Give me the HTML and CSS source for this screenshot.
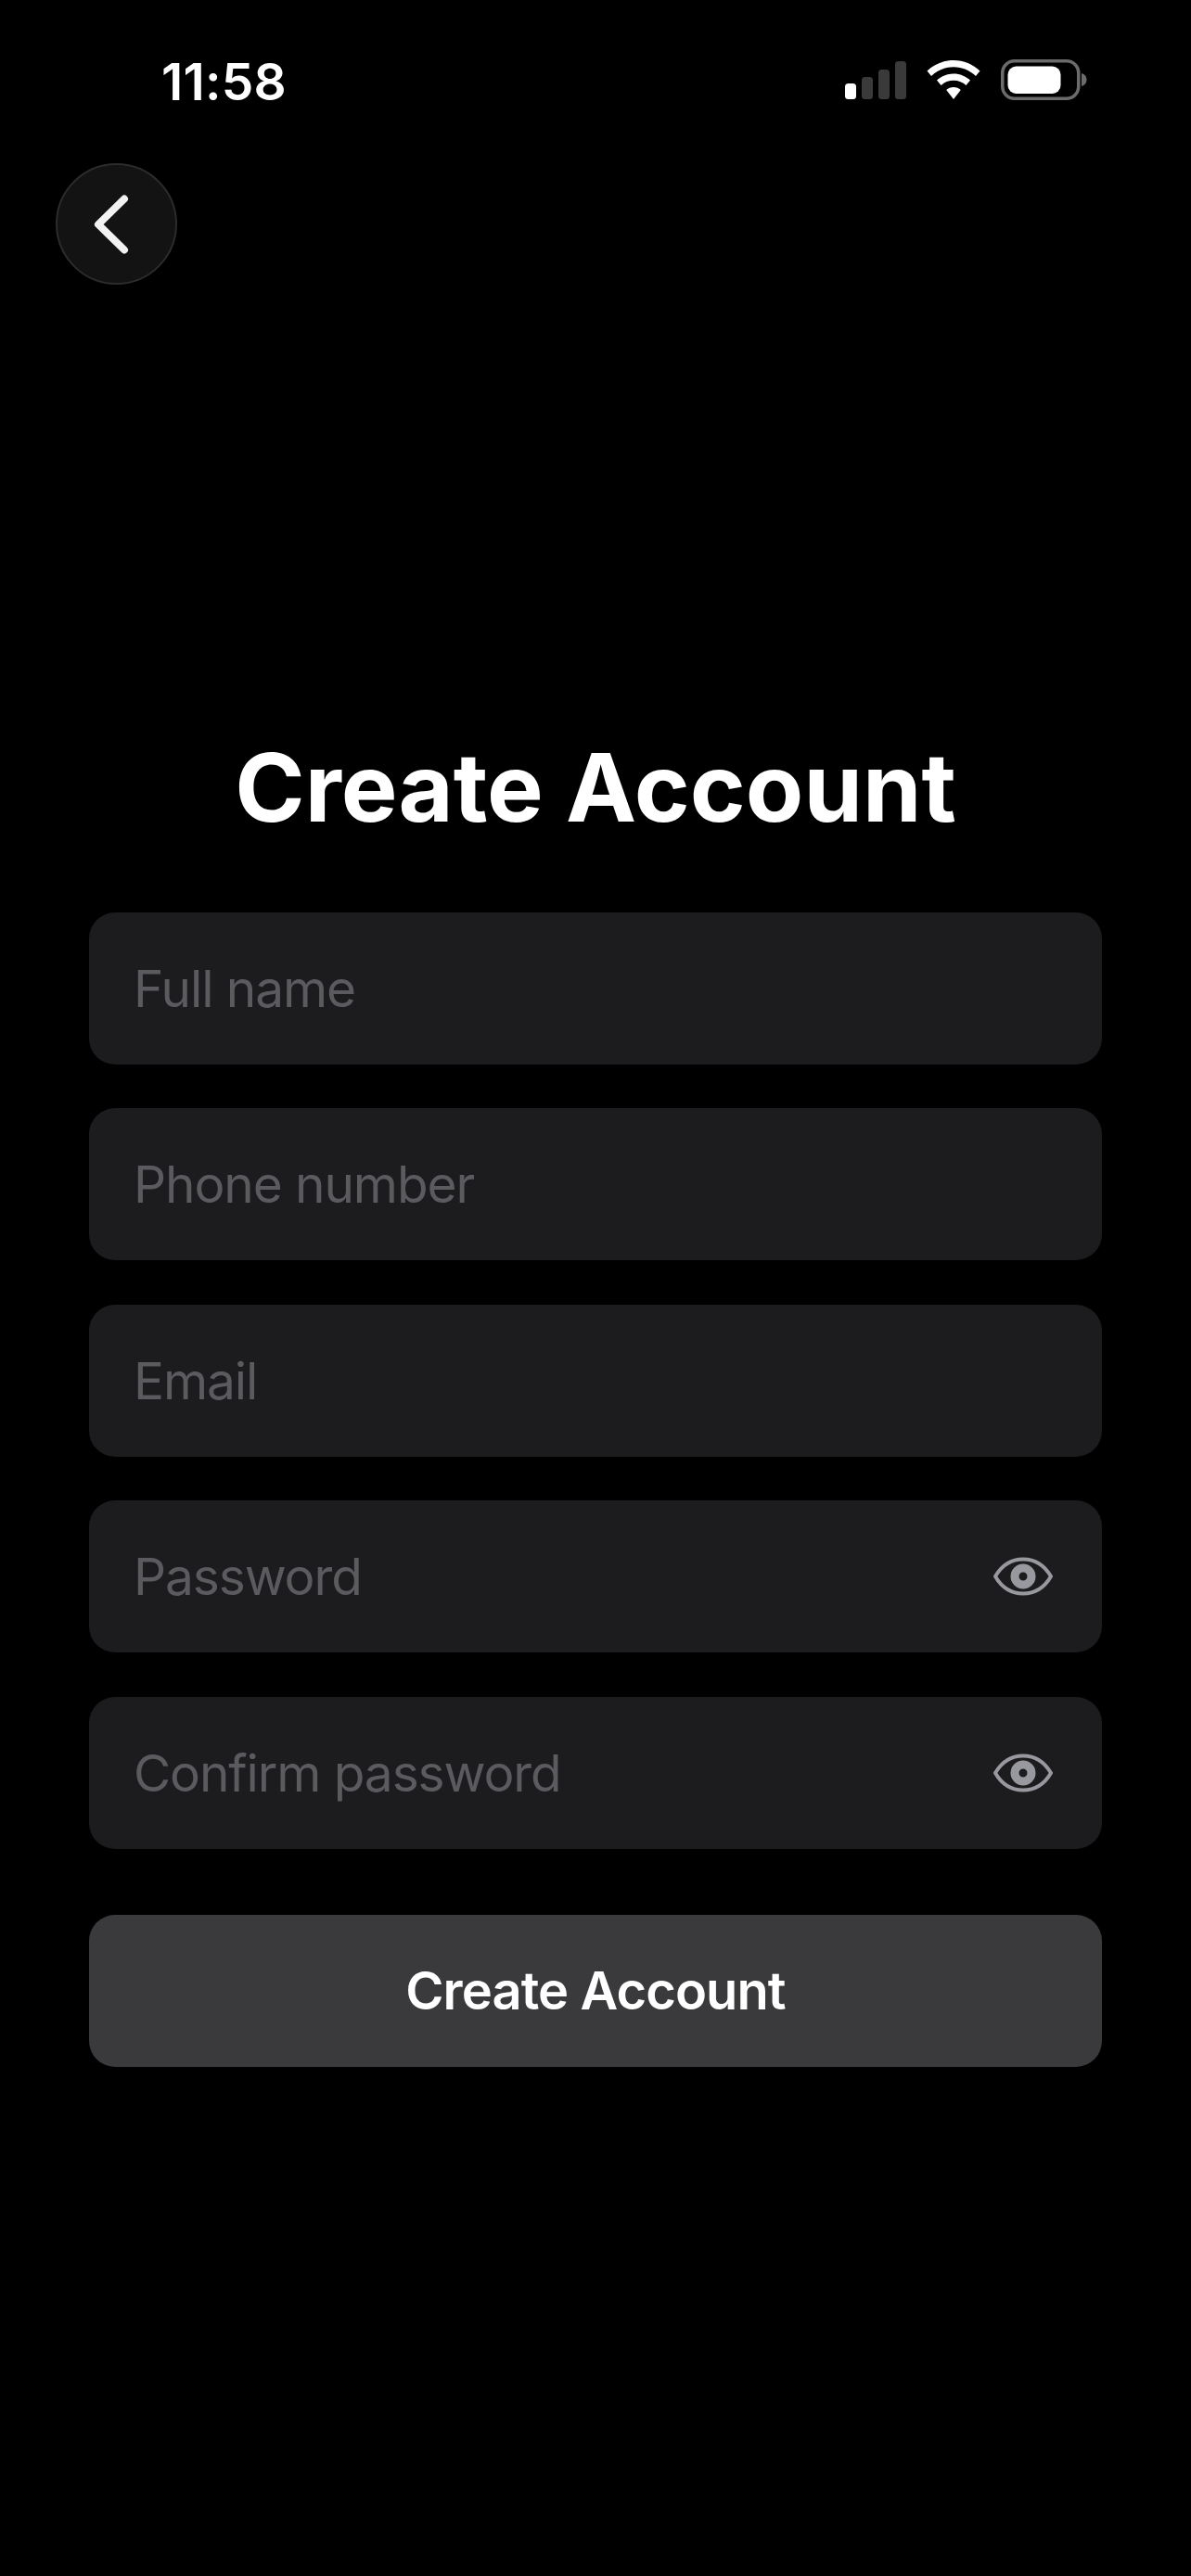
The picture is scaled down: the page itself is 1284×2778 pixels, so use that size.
FILE: index.html
```html
<!DOCTYPE html>
<html lang="en">
<head>
<meta charset="utf-8">
<title>Create Account</title>
<link rel="stylesheet" href="styles.css">
</head>
<body>
<main class="screen">
  <header class="status">
    <span class="time">11:58</span>
    <div class="indicators">
      <svg class="signal" width="66" height="41" viewBox="0 0 66 41"><rect x="0" y="24" width="12" height="17" rx="3.5" fill="#fff"/><rect x="18" y="17" width="12" height="24" rx="3.5" fill="#3a3a3a"/><rect x="36" y="9" width="12" height="32" rx="3.5" fill="#3a3a3a"/><rect x="54" y="0" width="12" height="41" rx="3.5" fill="#3a3a3a"/></svg>
      <svg class="wifi" width="58" height="42" viewBox="0 0 58 42"><path d="M29 0C18 0 8 4.300 0.500 11.500L5 17C11.500 10.800 19.800 7.200 29 7.200S46.500 10.800 53 17L57.500 11.500C50 4.300 40 0 29 0Z" fill="#fff"/><path d="M29 14.500C22 14.500 15.800 17.200 11 21.600L15.500 27C19 23.800 23.700 21.800 29 21.800S39 23.800 42.500 27L47 21.600C42.200 17.200 36 14.500 29 14.500Z" fill="#fff"/><path d="M29 29C26 29 23.200 30 21.200 31.900L29 42L36.800 31.900C34.800 30 32 29 29 29Z" fill="#fff"/></svg>
      <svg class="battery" width="93" height="44" viewBox="0 0 93 44"><rect x="1.750" y="1.750" width="82" height="40.500" rx="13" fill="none" stroke="#6b6b6b" stroke-width="3.500"/><rect x="7.500" y="7.500" width="57" height="29.500" rx="9" fill="#fff"/><path d="M87 15C90.500 16 92.500 18.500 92.500 22S90.500 28 87 29Z" fill="#6b6b6b"/></svg>
    </div>
  </header>

  <nav class="topbar">
    <button class="back" type="button" aria-label="Back">
      <svg width="40" height="64" viewBox="0 0 40 64"><path d="M33 4.500L5 32L33 59.500" fill="none" stroke="#f2f2f2" stroke-width="8" stroke-linecap="round" stroke-linejoin="round"/></svg>
    </button>
  </nav>

  <h1 class="title">Create Account</h1>

  <form class="form">
    <div class="field"><span class="placeholder">Full name</span></div>
    <div class="field"><span class="placeholder">Phone number</span></div>
    <div class="field"><span class="placeholder">Email</span></div>
    <div class="field">
      <span class="placeholder">Password</span>
      <svg class="eye" width="64" height="42" viewBox="0 0 64 42"><path d="M2 21C9 9 20 2.500 32 2.500S55 9 62 21C55 33 44 39.500 32 39.500S9 33 2 21Z" fill="none" stroke="#98989f" stroke-width="4" stroke-linejoin="round"/><circle cx="32" cy="21" r="9" fill="none" stroke="#98989f" stroke-width="9"/></svg>
    </div>
    <div class="field">
      <span class="placeholder">Confirm password</span>
      <svg class="eye" width="64" height="42" viewBox="0 0 64 42"><path d="M2 21C9 9 20 2.500 32 2.500S55 9 62 21C55 33 44 39.500 32 39.500S9 33 2 21Z" fill="none" stroke="#98989f" stroke-width="4" stroke-linejoin="round"/><circle cx="32" cy="21" r="9" fill="none" stroke="#98989f" stroke-width="9"/></svg>
    </div>
    <button class="submit" type="button">Create Account</button>
  </form>
</main>
</body>
</html>
```

FILE: styles.css
```css
* {
  box-sizing: border-box;
}

html,
body {
  margin: 0;
  background: #000;
}

body {
  font-family: Inter, "Liberation Sans", sans-serif;
  color: #fff;
}

.screen {
  width: 1284px;
  height: 2778px;
  overflow: hidden;
  background: #000;
}

.status {
  display: flex;
  align-items: center;
  justify-content: space-between;
  height: 176px;
  padding: 0 112px 0 174px;
}

.time {
  font-size: 55px;
  font-weight: 600;
  line-height: 64px;
  letter-spacing: 0.2px;
}

.indicators {
  display: flex;
  align-items: center;
  gap: 22px;
  padding-bottom: 4px;
}

.signal,
.wifi,
.battery,
.eye {
  display: block;
  flex: none;
}

.topbar {
  padding-left: 60px;
}

.back {
  display: flex;
  align-items: center;
  justify-content: center;
  width: 131px;
  height: 131px;
  padding: 0 9px 0 0;
  border: 2px solid #2c2c2c;
  border-radius: 50%;
  background: #131313;
}

.title {
  margin: 480px 0 0;
  font-size: 102px;
  font-weight: 700;
  line-height: 124px;
  text-align: center;
}

.form {
  display: flex;
  flex-direction: column;
  gap: 47.500px;
  margin-top: 72.500px;
  padding: 0 96px;
}

.field {
  display: flex;
  align-items: center;
  justify-content: space-between;
  height: 164px;
  padding: 0 53px 0 48px;
  border-radius: 28px;
  background: #1c1c1e;
}

.placeholder {
  font-size: 55px;
  font-weight: 400;
  letter-spacing: -1.100px;
  color: #5a5a5f;
}

.submit {
  height: 164px;
  margin-top: 24px;
  padding: 0;
  border: 0;
  border-radius: 28px;
  background: #3a3a3c;
  color: #fff;
  font-family: inherit;
  font-size: 56px;
  font-weight: 600;
  letter-spacing: -0.9px;
}
```
